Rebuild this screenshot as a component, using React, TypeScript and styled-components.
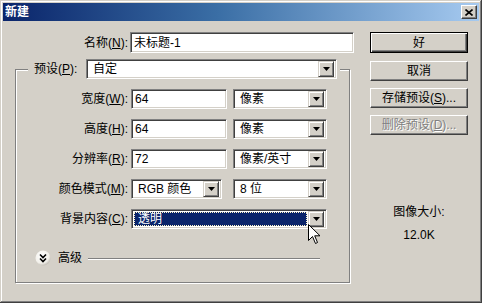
import React from 'react';
import styled, { createGlobalStyle } from 'styled-components';

const GlobalStyle = createGlobalStyle`
  html, body {
    margin: 0;
    padding: 0;
    background: #d4d0c8;
  }
  body {
    font-family: "Liberation Sans", "Noto Sans CJK SC", sans-serif;
    font-size: 12px;
    color: #000;
  }
`;

const Window = styled.div`
  width: 482px;
  height: 303px;
  box-sizing: border-box;
  padding: 3px;
  background: #d4d0c8;
  box-shadow: inset -1px -1px 0 #404040, inset 1px 1px 0 #d4d0c8,
    inset -2px -2px 0 #808080, inset 2px 2px 0 #fff;
  display: flex;
  flex-direction: column;
`;

const TitleBar = styled.div`
  height: 18px;
  flex-shrink: 0;
  background: linear-gradient(to right, #0a246a 0%, #3a6ea5 45%, #a6caf0 100%);
  display: flex;
  align-items: center;
  justify-content: space-between;
  padding: 0 2px 0 2px;
`;

const Title = styled.span`
  color: #fff;
  font-weight: bold;
  font-size: 12px;
  line-height: 18px;
  letter-spacing: 0;
`;

const CloseButton = styled.div`
  width: 16px;
  height: 14px;
  box-sizing: border-box;
  background: #d4d0c8;
  border: 1px solid;
  border-color: #fff #404040 #404040 #fff;
  box-shadow: inset -1px -1px 0 #808080;
  display: flex;
  align-items: center;
  justify-content: center;
`;

const Body = styled.div`
  flex: 1;
  display: flex;
  padding: 11px 0 0 12px;
`;

const LeftColumn = styled.div`
  width: 340px;
  display: flex;
  flex-direction: column;
`;

const NameRow = styled.div`
  display: grid;
  grid-template-columns: 113px 224px;
  column-gap: 2px;
  align-items: center;
  height: 21px;
`;

const Label = styled.span<{ pad?: number }>`
  text-align: right;
  white-space: nowrap;
  padding-right: ${p => p.pad ?? 0}px;
  line-height: 14px;
`;

const Sunken = styled.div<{ w?: number; h?: number }>`
  box-sizing: border-box;
  width: ${p => (p.w ? `${p.w}px` : 'auto')};
  height: ${p => p.h ?? 20}px;
  background: #fff;
  border: 1px solid;
  border-color: #808080 #fff #fff #808080;
  box-shadow: inset 1px 1px 0 #404040, inset -1px -1px 0 #d4d0c8;
  display: flex;
  align-items: center;
  padding: 2px;
  position: relative;
`;

const FieldText = styled.span`
  padding-left: 1px;
  line-height: 14px;
  white-space: nowrap;
`;

const SelectValue = styled.div<{ selected?: boolean }>`
  flex: 1;
  align-self: stretch;
  display: flex;
  align-items: center;
  padding-left: 4px;
  margin-right: 1px;
  background: ${p => (p.selected ? '#0a246a' : 'transparent')};
  color: ${p => (p.selected ? '#fff' : '#000')};
  outline: ${p => (p.selected ? '1px dotted #fff6c8' : 'none')};
  outline-offset: -1px;
  white-space: nowrap;
  line-height: 14px;
`;

const ArrowButton = styled.div`
  width: 16px;
  height: 16px;
  box-sizing: border-box;
  background: #d4d0c8;
  border: 1px solid;
  border-color: #d4d0c8 #404040 #404040 #d4d0c8;
  box-shadow: inset 1px 1px 0 #fff, inset -1px -1px 0 #808080;
  display: flex;
  align-items: center;
  justify-content: center;
  flex-shrink: 0;
`;

const Group = styled.fieldset`
  margin: 6px 0 0 0;
  width: 335px;
  box-sizing: border-box;
  padding: 0 0 15px 0;
  border: 1px solid #808080;
  box-shadow: inset 1px 1px 0 #fff, 1px 1px 0 #fff;
`;

const Legend = styled.legend`
  margin-left: 12px;
  padding: 0 3px 0 6px;
  background: #d4d0c8;
  display: flex;
  align-items: center;
  gap: 3px;
`;

const LegendLabel = styled.span`
  width: 49px;
  white-space: nowrap;
  line-height: 14px;
`;

const FormGrid = styled.div`
  display: grid;
  grid-template-columns: 115px 102px 94px;
  grid-auto-rows: 20px;
  row-gap: 10px;
  align-items: center;
  margin-top: 10px;
`;

const Advanced = styled.div`
  display: flex;
  align-items: center;
  margin-top: 20px;
  padding-left: 19px;
  padding-right: 29px;
  height: 18px;
`;

const AdvancedText = styled.span`
  margin-left: 7px;
  line-height: 14px;
`;

const Etched = styled.div`
  flex: 1;
  height: 1px;
  margin-left: 6px;
  background: #808080;
  box-shadow: 0 1px 0 #fff;
`;

const RightColumn = styled.div`
  width: 98px;
  margin-left: 15px;
  display: flex;
  flex-direction: column;
`;

const Button = styled.div<{ isDefault?: boolean; disabled?: boolean; gap?: number }>`
  box-sizing: border-box;
  height: ${p => (p.isDefault ? 21 : 20)}px;
  margin-top: ${p => p.gap ?? 0}px;
  background: #d4d0c8;
  border: 1px solid;
  border-color: ${p => (p.isDefault ? '#000' : '#fff #404040 #404040 #fff')};
  box-shadow: ${p =>
    p.isDefault
      ? 'inset 1px 1px 0 #fff, inset -1px -1px 0 #404040, inset -2px -2px 0 #808080'
      : 'inset -1px -1px 0 #808080'};
  display: flex;
  align-items: center;
  justify-content: center;
  line-height: 14px;
  color: ${p => (p.disabled ? '#808080' : '#000')};
  text-shadow: ${p => (p.disabled ? '1px 1px 0 #fff' : 'none')};
  white-space: nowrap;
`;

const SizeInfo = styled.div`
  margin-top: 70px;
  display: flex;
  flex-direction: column;
  align-items: center;
  gap: 9px;
  line-height: 14px;
`;

const Cursor = styled.svg`
  position: absolute;
  left: 176px;
  top: 14px;
  pointer-events: none;
`;

const DownArrow = () => (
  <svg width="7" height="4" viewBox="0 0 7 4">
    <path d="M0 0h7L3.5 4z" fill="#000" />
  </svg>
);

type SelectProps = { w: number; value: string; selected?: boolean; cursor?: boolean };

const Select = ({ w, value, selected, cursor }: SelectProps) => (
  <Sunken w={w}>
    <SelectValue selected={selected}>{value}</SelectValue>
    <ArrowButton>
      <DownArrow />
    </ArrowButton>
    {cursor && (
      <Cursor width="13" height="21" viewBox="0 0 13 21">
        <path
          d="M0.5 0.5 L0.5 16.5 L4.5 12.5 L7.5 19.5 L9.5 18.5 L6.7 11.8 L12 11.8 Z"
          fill="#fff"
          stroke="#000"
          strokeWidth="1"
        />
      </Cursor>
    )}
  </Sunken>
);

const Input = ({ w, value, h }: { w: number; value: string; h?: number }) => (
  <Sunken w={w} h={h}>
    <FieldText>{value}</FieldText>
  </Sunken>
);

const ExpandIcon = () => (
  <svg width="16" height="16" viewBox="0 0 16 16">
    <defs>
      <radialGradient id="chev" cx="40%" cy="35%" r="70%">
        <stop offset="0%" stopColor="#ffffff" />
        <stop offset="70%" stopColor="#f2f0ea" />
        <stop offset="100%" stopColor="#b8b4ac" />
      </radialGradient>
    </defs>
    <circle cx="8" cy="8" r="7.5" fill="url(#chev)" />
    <path d="M5 4.5 L8 7.5 L11 4.5 M5 8.5 L8 11.5 L11 8.5" fill="none" stroke="#000" strokeWidth="1.6" />
  </svg>
);

const App: React.FC = () => {
  return (
    <>
      <GlobalStyle />
      <Window>
        <TitleBar>
          <Title>新建</Title>
          <CloseButton>
            <svg width="8" height="7" viewBox="0 0 8 7">
              <path d="M0.5 0.5 L7.5 6.5 M7.5 0.5 L0.5 6.5" stroke="#000" strokeWidth="1.6" />
            </svg>
          </CloseButton>
        </TitleBar>
        <Body>
          <LeftColumn>
            <NameRow>
              <Label>名称(<u>N</u>):</Label>
              <Input w={224} h={21} value="未标题-1" />
            </NameRow>
            <Group>
              <Legend>
                <LegendLabel>预设(<u>P</u>):</LegendLabel>
                <Select w={251} value="自定" />
              </Legend>
              <FormGrid>
                <Label pad={3}>宽度(<u>W</u>):</Label>
                <Input w={96} value="64" />
                <Select w={94} value="像素" />

                <Label pad={3}>高度(<u>H</u>):</Label>
                <Input w={96} value="64" />
                <Select w={94} value="像素" />

                <Label pad={3}>分辨率(<u>R</u>):</Label>
                <Input w={96} value="72" />
                <Select w={94} value="像素/英寸" />

                <Label pad={3}>颜色模式(<u>M</u>):</Label>
                <Select w={91} value="RGB 颜色" />
                <Select w={94} value="8 位" />

                <Label pad={3}>背景内容(<u>C</u>):</Label>
                <div style={{ gridColumn: 'span 2' }}>
                  <Select w={196} value="透明" selected cursor />
                </div>
              </FormGrid>
              <Advanced>
                <ExpandIcon />
                <AdvancedText>高级</AdvancedText>
                <Etched />
              </Advanced>
            </Group>
          </LeftColumn>
          <RightColumn>
            <Button isDefault>好</Button>
            <Button gap={8}>取消</Button>
            <Button gap={7}>存储预设(<u>S</u>)...</Button>
            <Button gap={7} disabled>删除预设(<u>D</u>)...</Button>
            <SizeInfo>
              <span>图像大小:</span>
              <span>12.0K</span>
            </SizeInfo>
          </RightColumn>
        </Body>
      </Window>
    </>
  );
};

export default App;
